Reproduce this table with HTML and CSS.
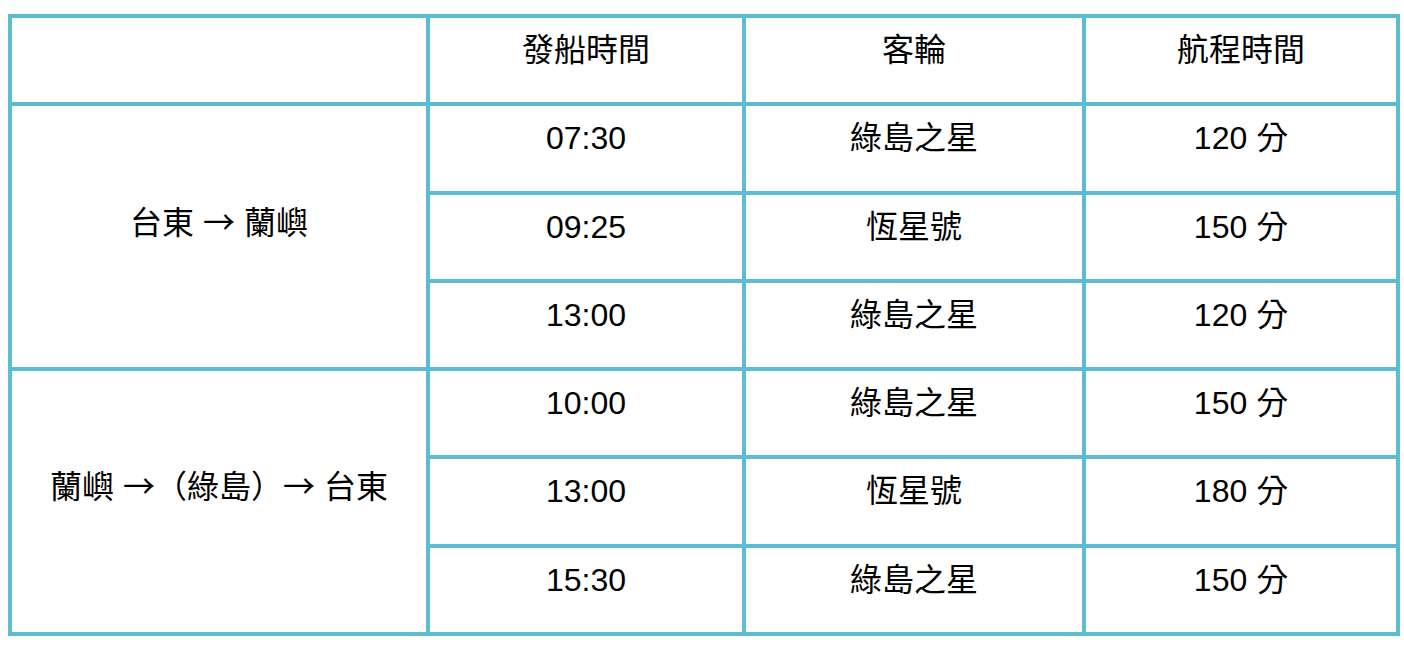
FILE: index.html
```html
<!DOCTYPE html>
<html lang="zh-Hant">
<head>
<meta charset="utf-8">
<title>船班時刻表</title>
<link rel="stylesheet" href="styles.css">
</head>
<body>
<table class="schedule">
  <colgroup>
    <col class="c-route">
    <col class="c-time">
    <col class="c-ship">
    <col class="c-dur">
  </colgroup>
  <thead>
    <tr>
      <th></th>
      <th>發船時間</th>
      <th>客輪</th>
      <th>航程時間</th>
    </tr>
  </thead>
  <tbody>
    <tr>
      <td class="route" rowspan="3">台東 <span class="arrow">→</span> 蘭嶼</td>
      <td>07:30</td>
      <td>綠島之星</td>
      <td>120 分</td>
    </tr>
    <tr>
      <td>09:25</td>
      <td>恆星號</td>
      <td>150 分</td>
    </tr>
    <tr>
      <td>13:00</td>
      <td>綠島之星</td>
      <td>120 分</td>
    </tr>
    <tr>
      <td class="route" rowspan="3">蘭嶼 <span class="arrow">→</span>（綠島）<span class="arrow">→</span> 台東</td>
      <td>10:00</td>
      <td>綠島之星</td>
      <td>150 分</td>
    </tr>
    <tr>
      <td>13:00</td>
      <td>恆星號</td>
      <td>180 分</td>
    </tr>
    <tr>
      <td>15:30</td>
      <td>綠島之星</td>
      <td>150 分</td>
    </tr>
  </tbody>
</table>
</body>
</html>
```
FILE: styles.css
```css
html, body {
  margin: 0;
  padding: 0;
  background: #ffffff;
}

body {
  padding: 14px 0 0 8px;
  font-family: "Liberation Sans", "Noto Sans CJK TC", sans-serif;
  color: #000000;
}

.schedule {
  border-collapse: collapse;
  table-layout: fixed;
  width: 1388px;
  border: 4px solid #5bbcd2;
}

.c-route { width: 418px; }
.c-time { width: 316px; }
.c-ship { width: 340px; }
.c-dur { width: 314px; }

.schedule th,
.schedule td {
  border: 4px solid #5bbcd2;
  height: 88.3px;
  padding: 0 0 20px 0;
  box-sizing: border-box;
  text-align: center;
  vertical-align: middle;
  font-size: 32px;
  font-weight: normal;
  line-height: 1.2;
}

.schedule td.route {
  padding-bottom: 31px;
}

.arrow {
  font-family: "Noto Sans CJK TC", sans-serif;
}
```
